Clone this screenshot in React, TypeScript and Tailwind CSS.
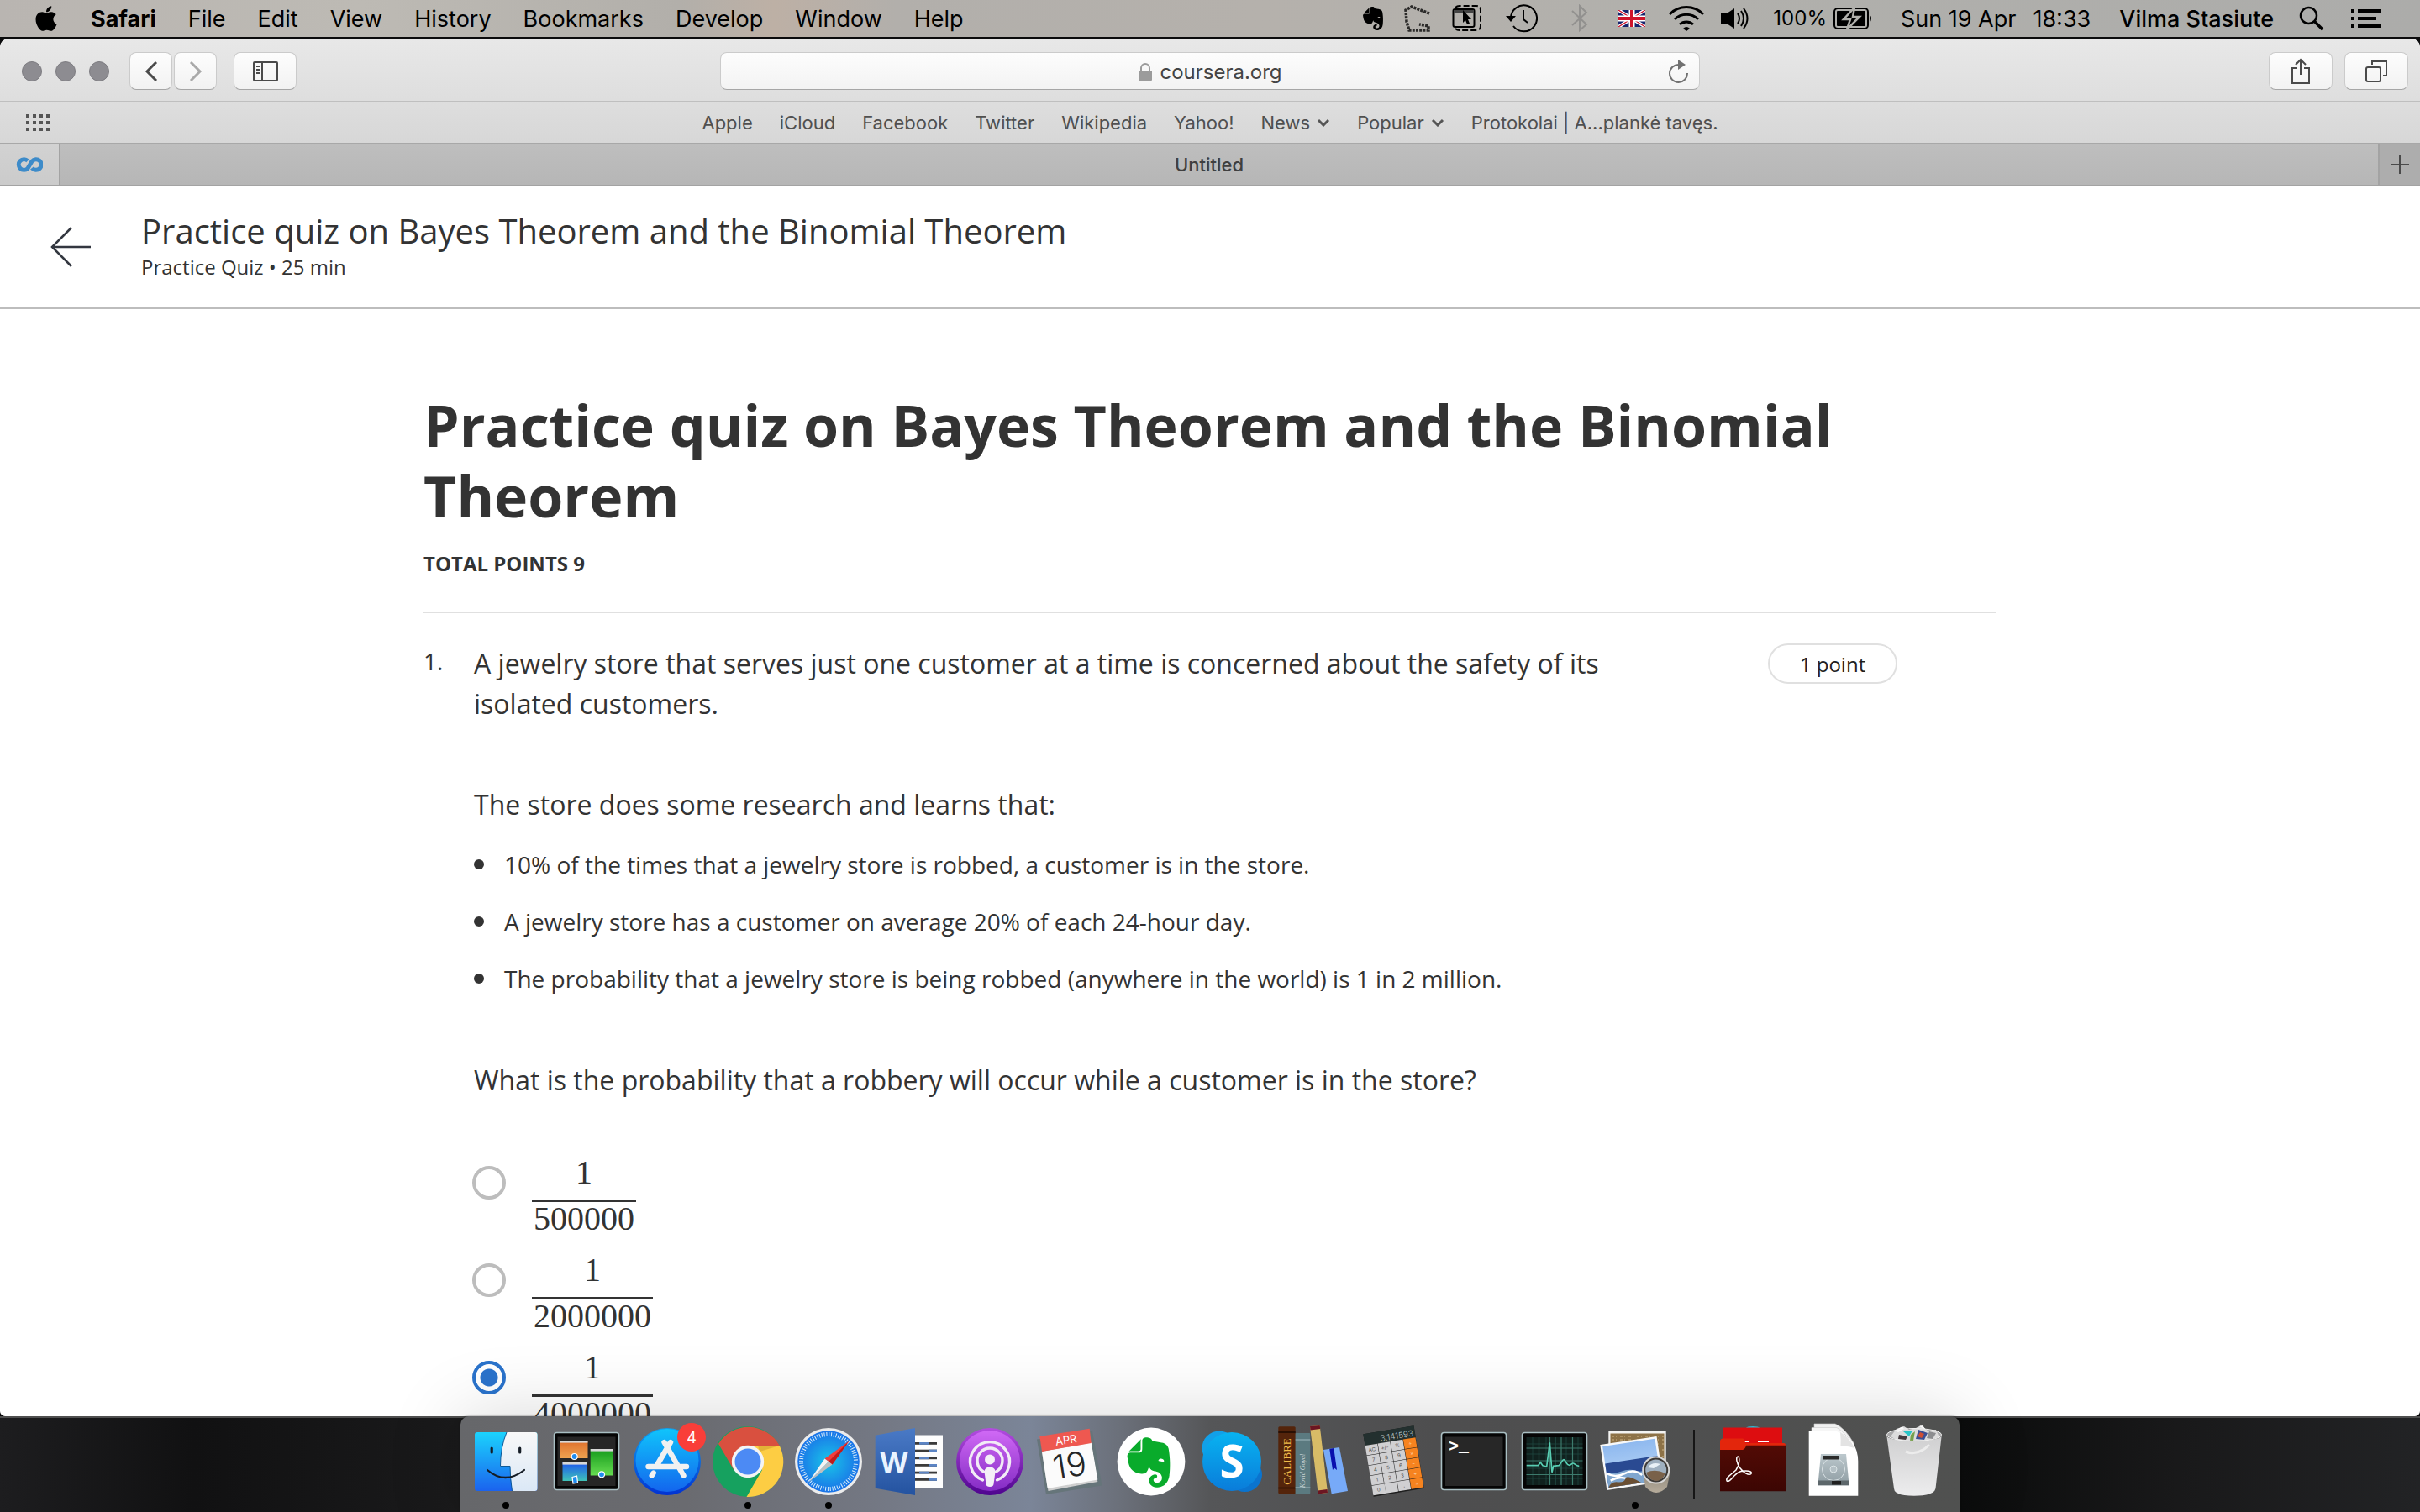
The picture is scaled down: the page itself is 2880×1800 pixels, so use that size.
import React, { useState } from "react";
import { FaApple, FaEvernote } from "react-icons/fa";

const menus = ["File", "Edit", "View", "History", "Bookmarks", "Develop", "Window", "Help"];

const bookmarks: { label: string; menu?: boolean }[] = [
  { label: "Apple" },
  { label: "iCloud" },
  { label: "Facebook" },
  { label: "Twitter" },
  { label: "Wikipedia" },
  { label: "Yahoo!" },
  { label: "News", menu: true },
  { label: "Popular", menu: true },
  { label: "Protokolai | A...plankė tavęs." },
];

const facts = [
  "10% of the times that a jewelry store is robbed, a customer is in the store.",
  "A jewelry store has a customer on average 20% of each 24-hour day.",
  "The probability that a jewelry store is being robbed (anywhere in the world) is 1 in 2 million.",
];

const answers = ["500000", "2000000", "4000000"];

/* ---------- menu bar ---------- */

function MenuBar() {
  return (
    <header className="flex h-11 shrink-0 items-center bg-[linear-gradient(90deg,#b9b5b1_0%,#bdbab4_15%,#b2afaa_28%,#bdb0a5_32%,#b2afab_37%,#b5b1ac_52%,#b1b0ac_70%,#acacaa_100%)] pr-[46px] pl-[38px] font-['Inter',sans-serif] text-[27px] leading-none text-black">
      <button aria-label="Apple menu" className="mr-9">
        <FaApple size={34} />
      </button>
      <nav aria-label="Menu bar" className="flex gap-[38px]">
        <button className="font-bold">Safari</button>
        {menus.map((m) => (
          <button key={m}>{m}</button>
        ))}
      </nav>
      <div className="ml-auto flex items-center">
        <FaEvernote size={32} className="mr-5" />
        <svg width="34" height="34" viewBox="0 0 34 34" className="mr-6" fill="none" stroke="#2b2a29" strokeWidth="3.5" strokeDasharray="3 1.2">
          <path d="M31 11L10 3L3 7L4 21L7 31H30V26L19 24" />
        </svg>
        <svg width="36" height="34" viewBox="0 0 36 34" className="mr-7" fill="none" stroke="#000" strokeWidth="2">
          <path d="M4 4Q6 2 9 2H29Q34 2 34 7V26Q34 31 29 31H9Q6 31 4 29" strokeDasharray="7 3" />
          <rect x="1.500" y="6" width="25" height="21" rx="2" />
          <path d="M2 9H26" stroke="#444" strokeWidth="4" />
          <path d="M13 7V22L16 19L18 24L21 23L19 18H23Z" fill="#000" stroke="none" />
        </svg>
        <svg width="38" height="34" viewBox="0 0 38 34" className="mr-10" fill="none" stroke="#000" strokeWidth="2">
          <path d="M6 17A15.500 15.500 0 1 1 9 26" />
          <path d="M0 14H12L6 21Z" fill="#000" stroke="none" />
          <path d="M21 7V18L26 22" />
        </svg>
        <svg width="20" height="34" viewBox="0 0 20 34" className="mr-9" fill="none" stroke="#92918f" strokeWidth="2">
          <path d="M1 8L18 24L10 31V2L18 10L1 25" />
        </svg>
        <svg width="32" height="20" viewBox="0 0 32 20" className="mr-7">
          <path d="M0 0H32V20H0Z" fill="#16246e" />
          <path d="M0 0L32 20M32 0L0 20" stroke="#fff" strokeWidth="4" />
          <path d="M0 0L32 20M32 0L0 20" stroke="#cf142b" strokeWidth="1.300" />
          <path d="M16 0V20M0 10H32" stroke="#fff" strokeWidth="7" />
          <path d="M16 0V20M0 10H32" stroke="#cf142b" strokeWidth="4" />
        </svg>
        <svg width="42" height="30" viewBox="0 0 42 30" className="mr-5" fill="none" stroke="#000" strokeWidth="3">
          <path d="M1 10A28 28 0 0 1 41 10M7 16A20 20 0 0 1 35 16M13 22A12 12 0 0 1 29 22" />
          <path d="M17 27Q21 23 25 27L21 30Z" fill="#000" stroke="none" />
        </svg>
        <svg width="34" height="26" viewBox="0 0 34 26" className="mr-7" fill="none" stroke="#000" strokeWidth="2">
          <path d="M0 7H7L16 1V25L7 19H0Z" fill="#000" stroke="none" />
          <path d="M20 7Q24 13 20 19M24 4Q30 13 24 22M27 1Q36 13 27 25" />
        </svg>
        <span className="mr-2 text-2xl leading-none">100%</span>
        <svg width="48" height="26" viewBox="0 0 48 26" className="mr-8">
          <rect x="1" y="1" width="40" height="24" rx="4" fill="none" stroke="#000" strokeWidth="2" />
          <rect x="4" y="4" width="34" height="18" rx="1" fill="#000" />
          <path d="M43 8Q47 13 43 18Z" />
          <path d="M25 0L12 14H20L16 26L31 11H23Z" fill="#000" stroke="#b1b0ac" strokeWidth="2.500" />
        </svg>
        <span className="mr-5">Sun 19 Apr</span>
        <span className="mr-[34px]">18:33</span>
        <span className="mr-[30px] font-medium">Vilma Stasiute</span>
        <button aria-label="Spotlight search" className="mr-8">
          <svg width="30" height="30" viewBox="0 0 30 30" fill="none" stroke="#000" strokeWidth="2.500">
            <circle cx="11.500" cy="11.500" r="9.500" />
            <path d="M18 18L28 28" strokeWidth="3.500" />
          </svg>
        </button>
        <button aria-label="Notification centre">
          <svg width="36" height="22" viewBox="0 0 36 22">
            <path d="M0 0H4V4H0ZM8 0H36V4H8ZM0 9H4V13H0ZM8 9H30V13H8ZM0 18H4V22H0ZM8 18H36V22H8Z" />
          </svg>
        </button>
      </div>
    </header>
  );
}

/* ---------- browser chrome ---------- */

function ToolButton({ label, className, children }: { label: string; className: string; children: React.ReactNode }) {
  return (
    <button
      aria-label={label}
      className={
        "flex h-[45px] items-center justify-center rounded-lg border border-[#cbcbcb] border-b-[#a6a6a6] bg-linear-to-b from-[#fdfdfd] to-[#f2f2f2] " +
        className
      }
    >
      {children}
    </button>
  );
}

function Toolbar() {
  const [url, setUrl] = useState("coursera.org");
  return (
    <div className="flex h-[76px] items-center border-b-2 border-[#bfbfbf] pt-[3px]">
      <div className="flex flex-1 items-center">
        <div className="mr-6 ml-[26px] flex gap-4">
          {["Close", "Minimise", "Zoom"].map((n) => (
            <button key={n} aria-label={n} className="size-6 rounded-full border border-[#7d7c81] bg-[#8d8c91]" />
          ))}
        </div>
        <ToolButton label="Back" className="mr-0.5 w-[51px]">
          <svg width="16" height="26" viewBox="0 0 16 26" fill="none" stroke="#4a4a4a" strokeWidth="3">
            <path d="M14 2L3 13L14 24" />
          </svg>
        </ToolButton>
        <ToolButton label="Forward" className="mr-5 w-[51px]">
          <svg width="16" height="26" viewBox="0 0 16 26" fill="none" stroke="#a9a9a9" strokeWidth="3">
            <path d="M2 2L13 13L2 24" />
          </svg>
        </ToolButton>
        <ToolButton label="Show sidebar" className="w-[75px]">
          <svg width="30" height="24" viewBox="0 0 30 24" fill="none" stroke="#4a4a4a" strokeWidth="2">
            <rect x="1" y="1" width="28" height="22" rx="1" />
            <path d="M11 1V23M4 6H8M4 10H8M4 14H8" />
          </svg>
        </ToolButton>
      </div>
      <div className="flex h-[45px] w-[40.5%] items-center rounded-lg border border-[#cbcbcb] border-b-[#a6a6a6] bg-linear-to-b from-[#fdfdfd] to-[#f3f3f3] px-3">
        <div className="w-6" />
        <label className="flex flex-1 items-center justify-center gap-2 pt-0.5">
          <svg width="18" height="22" viewBox="0 0 18 22" aria-label="Secure">
            <path d="M4 10V6a5 5 0 0 1 10 0V10" fill="none" stroke="#9b9b9b" strokeWidth="2" />
            <rect x="1" y="9" width="16" height="12" rx="1" fill="#9b9b9b" />
          </svg>
          <input
            aria-label="Address"
            value={url}
            onChange={(e) => setUrl(e.target.value)}
            className="[field-sizing:content] bg-transparent font-['Inter',sans-serif] text-2xl leading-8 text-[#444] outline-none"
          />
        </label>
        <button aria-label="Reload">
          <svg width="24" height="28" viewBox="0 0 24 28" fill="none" stroke="#717171" strokeWidth="2">
            <path d="M22 16A10.500 10.500 0 1 1 12 6" />
            <path d="M11 0L20 6L11 12Z" fill="#717171" stroke="none" />
          </svg>
        </button>
      </div>
      <div className="flex flex-1 justify-end gap-[14px]">
        <ToolButton label="Share" className="w-[76px]">
          <svg width="24" height="32" viewBox="0 0 24 32" fill="none" stroke="#4a4a4a" strokeWidth="2">
            <path d="M8 12H2V30H22V12H16M12 20V3M6 8L12 2L18 8" />
          </svg>
        </ToolButton>
        <ToolButton label="Show all tabs" className="mr-[14px] w-[76px]">
          <svg width="26" height="26" viewBox="0 0 26 26" fill="none" stroke="#4a4a4a" strokeWidth="2">
            <rect x="1" y="8" width="17" height="17" rx="2" />
            <path d="M8 5V1H25V18H21" />
          </svg>
        </ToolButton>
      </div>
    </div>
  );
}

function BookmarksBar() {
  return (
    <nav
      aria-label="Favourites"
      className="flex h-[50px] items-center border-b-2 border-[#a8a8a8] px-[30px] font-['Inter',sans-serif] text-[22px] leading-7 text-[#505050]"
    >
      <button aria-label="Top sites" className="w-[30px]">
        <svg width="30" height="20" viewBox="0 0 30 20" fill="#555">
          {[0, 8, 16].map((y) =>
            [1, 9, 17, 25].map((x) => <rect key={`${x}-${y}`} x={x} y={y} width="4" height="4" />),
          )}
        </svg>
      </button>
      <div className="flex flex-1 justify-center gap-8">
        {bookmarks.map((b) => (
          <a key={b.label} href="#" className="flex items-center gap-2">
            {b.label}
            {b.menu && (
              <svg width="16" height="10" viewBox="0 0 16 10" fill="none" stroke="#555" strokeWidth="3">
                <path d="M2 2L8 8L14 2" />
              </svg>
            )}
          </a>
        ))}
      </div>
      <div className="w-[30px]" />
    </nav>
  );
}

function TabBar() {
  return (
    <div className="flex h-[50px] border-b-2 border-[#a3a3a3] bg-linear-to-b from-[#bebebe] to-[#b6b6b6]">
      <button aria-label="Coursera tab" className="flex w-[72px] items-center justify-center border-r-2 border-[#a3a3a3] bg-linear-to-b from-[#d2d2d2] to-[#cbcbcb]">
        <svg width="32" height="18" viewBox="0 0 32 18" fill="none" stroke="#3d8bc9" strokeWidth="5">
          <path d="M14 4.500A6.300 6.300 0 1 0 14 13.500L19 5A6.300 6.300 0 1 1 19 13" />
        </svg>
      </button>
      <button className="flex-1 pr-6 text-center font-['Inter',sans-serif] text-[22px] font-medium text-[#3f3f3f]">Untitled</button>
      <button aria-label="New tab" className="flex w-[50px] items-center justify-center border-l-2 border-[#a3a3a3] bg-[#adadad]">
        <svg width="24" height="24" viewBox="0 0 24 24" stroke="#4a4a4a" strokeWidth="2">
          <path d="M12 1V23M1 12H23" />
        </svg>
      </button>
    </div>
  );
}

/* ---------- quiz page ---------- */

function QuizHeader() {
  return (
    <div className="flex h-[146px] items-center border-b-2 border-[#bdbdbd] text-[#333]">
      <button aria-label="Back" className="mr-[60px] ml-[60px]">
        <svg width="48" height="48" viewBox="0 0 48 48" fill="none" stroke="#333740" strokeWidth="2.500">
          <path d="M48 24H2M25 1L2 24L25 47" />
        </svg>
      </button>
      <div className="-mt-0.5">
        <div className="text-[40px] leading-[50px]">Practice quiz on Bayes Theorem and the Binomial Theorem</div>
        <div className="text-2xl leading-9">Practice Quiz • 25 min</div>
      </div>
    </div>
  );
}

function Quiz() {
  const [picked, setPicked] = useState("4000000");
  return (
    <article className="mx-auto w-[65%] pt-24 text-[#333]">
      <h1 className="text-[68px] leading-[84px] font-bold">Practice quiz on Bayes Theorem and the Binomial Theorem</h1>
      <h2 className="mt-[21px] text-2xl leading-9 font-bold">TOTAL POINTS 9</h2>
      <hr className="mt-[39px] mb-9 border-t-2 border-[#e0e0e0]" />
      <section className="flex items-start">
        <div className="w-[60px] shrink-0 text-[28px] leading-[42px]">1.</div>
        <div className="w-[1420px] text-[32px] leading-[48px]">
          <p className="w-[1360px]">
            A jewelry store that serves just one customer at a time is concerned about the safety of its isolated customers.
          </p>
          <p className="mt-[72px]">The store does some research and learns that:</p>
          <ul className="mt-[26px] flex flex-col gap-[26px] text-[28px] leading-[42px]">
            {facts.map((f) => (
              <li key={f} className="flex items-center gap-6">
                <span className="size-3 rounded-full bg-[#333]" />
                {f}
              </li>
            ))}
          </ul>
          <p className="mt-[76px]">What is the probability that a robbery will occur while a customer is in the store?</p>
          <fieldset className="mt-[66px] flex flex-col gap-[21px]">
            {answers.map((a) => (
              <label key={a} className="flex items-start">
                <input
                  type="radio"
                  name="answer"
                  checked={picked === a}
                  onChange={() => setPicked(a)}
                  className="-ml-0.5 mt-3 mr-[31px] size-10 appearance-none rounded-full border-4 border-[#bdbdbd] checked:border-[#2a73cc] checked:bg-[radial-gradient(circle,#2a73cc_10px,transparent_11px)]"
                />
                <span className="flex flex-col text-center font-['Liberation_Serif',serif] text-[40px] leading-10">
                  <span className="mb-3">1</span>
                  <span className="border-t-[3px] border-[#333] px-0.5">{a}</span>
                </span>
              </label>
            ))}
          </fieldset>
        </div>
        <div className="ml-[120px] flex h-12 w-[154px] items-center justify-center rounded-full border-2 border-[#e0e0e0] pt-0.5 text-2xl text-[#1f1f1f]">
          1 point
        </div>
      </section>
    </article>
  );
}

/* ---------- dock ---------- */

function DockItem({ name, running, children }: { name: string; running?: boolean; children: React.ReactNode }) {
  return (
    <button aria-label={name} className="w-24">
      <svg width="96" height="114" viewBox="0 0 96 114">
        {children}
        {running && <circle cx="48" cy="106" r="4" fill="#000" />}
      </svg>
    </button>
  );
}

function Gradient({ id, from, to, x2 = "0" }: { id: string; from: string; to: string; x2?: string }) {
  return (
    <linearGradient id={id} x1="0" y1="0" x2={x2} y2="1">
      <stop offset="0" stopColor={from} />
      <stop offset="1" stopColor={to} />
    </linearGradient>
  );
}

function Screen() {
  return (
    <rect x="9.500" y="19.500" width="77" height="68" rx="3" fill="#050505" stroke="#a9bfc3" strokeWidth="1.600" />
  );
}

const calcKeys = [
  ["AC", "+/-", "%", "÷"],
  ["7", "8", "9", "×"],
  ["4", "5", "6", "−"],
  ["1", "2", "3", "+"],
  ["0", "", ".", "="],
];

function Dock() {
  return (
    <nav
      aria-label="Dock"
      className="relative z-10 flex h-full rounded-t-[10px] bg-[linear-gradient(90deg,#66676a_0%,#6a6b70_15%,#737782_27%,#7b8598_38%,#6b707a_44%,#555658_50%,#4e4e4f_65%,#505150_100%)] px-1.5 shadow-[0_0_90px_rgba(0,0,0,0.16),0_0_3px_rgba(0,0,0,0.5)]"
    >
      <DockItem name="Finder" running>
        <defs>
          <Gradient id="fin" from="#1bd3fd" to="#1b63ee" />
          <Gradient id="fin2" from="#f8f8f8" to="#dbe8f6" />
        </defs>
        <rect x="11" y="19" width="74.500" height="70" rx="3" fill="url(#fin)" />
        <path d="M49 19H82.500Q85.500 19 85.500 22V86Q85.500 89 82.500 89H55.500Q54 75 53 60H41.500Q41.500 37 49 19Z" fill="url(#fin2)" />
        <path d="M49 19Q41.500 37 41.500 59.500H53Q53 75 55.500 89" fill="none" stroke="#0f5a97" strokeWidth="1" />
        <path d="M31.200 38V43M64.700 38V43" stroke="#141c25" strokeWidth="3.200" strokeLinecap="round" />
        <path d="M26 64Q47 82 70 64" fill="none" stroke="#141c25" strokeWidth="2.200" strokeLinecap="round" />
      </DockItem>
      <DockItem name="Mission Control">
        <defs>
          <Gradient id="mo" from="#de6f2c" to="#efa351" />
          <Gradient id="mg" from="#149a1b" to="#66dc51" />
          <Gradient id="mb" from="#1d56ee" to="#3fc3b8" />
        </defs>
        <Screen />
        <rect x="13.500" y="24.500" width="69" height="58.500" fill="#262626" />
        <rect x="17" y="29" width="32.500" height="21" fill="url(#mo)" />
        <rect x="17" y="29" width="32.500" height="2.600" fill="#d8d8d8" />
        <rect x="52.700" y="39" width="26.500" height="31.500" fill="url(#mg)" />
        <rect x="52.700" y="39" width="26.500" height="2.600" fill="#d8d8d8" />
        <rect x="19.500" y="55" width="28.500" height="22" fill="url(#mb)" />
        <rect x="19.500" y="55" width="28.500" height="2.600" fill="#d8d8d8" />
        <circle cx="33.700" cy="48" r="3.500" fill="#1f8cf0" stroke="#fff" strokeWidth="1.200" />
        <circle cx="66" cy="69.300" r="3.500" fill="#1f8cf0" stroke="#fff" strokeWidth="1.200" />
        <path d="M31 72.500L36.500 71L37.500 79L32 80Z" fill="#1f8cf0" stroke="#fff" strokeWidth="1.200" />
      </DockItem>
      <DockItem name="App Store">
        <defs>
          <Gradient id="as" from="#10c4fb" to="#1366ee" />
          <Gradient id="as2" from="#10a0ee" to="#0232d2" />
        </defs>
        <circle cx="48" cy="54" r="40" fill="url(#as2)" />
        <circle cx="48" cy="52.500" r="37.500" fill="url(#as)" />
        <g stroke="#f1f1f1" strokeWidth="6.400" strokeLinecap="round">
          <path d="M52 31L36 58M31.700 67.500L29.700 70.500M25.500 60H71M44.500 31L67.500 70.500" />
        </g>
        <circle cx="77" cy="25" r="17" fill="#f93e39" />
        <text x="77" y="31.500" textAnchor="middle" fontSize="18" fill="#fff" className="font-['Inter',sans-serif]">4</text>
      </DockItem>
      <DockItem name="Chrome" running>
        <circle cx="48" cy="54" r="42" fill="#16a15f" />
        <path d="M85.700 35A42 42 0 0 1 46.500 96L65 64L48 35Z" fill="#fdcd43" />
        <path d="M13 32.700A42 42 0 0 1 85.700 35H48L31 63.500Z" fill="#d9503f" />
        <path d="M62 42L85.700 35H60Z" fill="#c99a2c" opacity=".5" />
        <circle cx="48" cy="54" r="19.200" fill="#f4f4f4" />
        <circle cx="48" cy="54" r="15.500" fill="#4c8af4" />
      </DockItem>
      <DockItem name="Safari" running>
        <defs>
          <radialGradient id="saf">
            <stop offset="0" stopColor="#19c5e8" />
            <stop offset="1" stopColor="#1a73e8" />
          </radialGradient>
        </defs>
        <circle cx="48" cy="54" r="40" fill="#ececec" />
        <circle cx="48" cy="54" r="36.800" fill="url(#saf)" />
        <circle cx="48" cy="54" r="32.500" fill="none" stroke="#d7ecfb" strokeWidth="5" strokeDasharray="1 1.836" />
        <path d="M72.500 29.500L43.500 50.500L52.500 57.500Z" fill="#f23d3b" />
        <path d="M72.500 29.500L48 54L52.500 57.500Z" fill="#c11b1b" />
        <path d="M24 78.500L43.500 50.500L48 54Z" fill="#f3f3f3" />
        <path d="M24 78.500L52.500 57.500L48 54Z" fill="#bfbfbf" />
      </DockItem>
      <DockItem name="Word">
        <defs>
          <Gradient id="wd" from="#4a7ac6" to="#2453a0" />
        </defs>
        <rect x="54" y="22.500" width="34" height="63.500" fill="#fdfdfd" />
        {[31, 39.7, 48.4, 57, 65.7, 74].map((y, i) => (
          <g key={y}>
            <rect x="55" y={y} width="26" height="2.800" fill="#3a3a3a" />
            <rect x={i % 2 ? 72 : 60} y={y} width={i % 2 ? 9 : 11} height="2.800" fill="#5b84c4" />
          </g>
        ))}
        <path d="M7.700 22.700L55 14V94L7.700 85.700Z" fill="url(#wd)" />
        <text x="30" y="67" textAnchor="middle" fontSize="34" fill="#eaf3ff" className="font-['Open_Sans',sans-serif] font-bold">W</text>
      </DockItem>
      <DockItem name="Podcasts">
        <defs>
          <Gradient id="pd" from="#d069f5" to="#842cc4" />
          <Gradient id="pd2" from="#b44de0" to="#4e038e" />
        </defs>
        <circle cx="48" cy="54" r="40" fill="url(#pd2)" />
        <circle cx="48" cy="53" r="36" fill="url(#pd)" />
        <g fill="none" stroke="#f2ecf6" strokeWidth="3.400" strokeLinecap="round">
          <path d="M39.500 76A23.500 23.500 0 1 1 56.500 76" />
          <path d="M40.500 66A15 15 0 1 1 55.500 66" />
        </g>
        <circle cx="48" cy="51.500" r="6" fill="#f4f0f7" />
        <path d="M41.500 66Q42 60.500 48 60.500T54.500 66L52.500 81Q52 84 48 84T43.500 81Z" fill="#f4f0f7" />
      </DockItem>
      <DockItem name="Calendar">
        <path d="M8 27.500L74 17.500L85.500 82.500L19 93Z" fill="#66757a" />
        <path d="M14 42L72.700 31.500L80.300 78L21.500 89Z" fill="#cfcfcf" />
        <path d="M14 42L72.700 31.500L80.300 75.500L20.700 86Z" fill="#fbfbfb" />
        <path d="M11.300 24L70.700 14.700L72.700 32L14 42Z" fill="#ee5850" />
        <g className="font-['Inter',sans-serif]" textAnchor="middle">
          <text x="42.700" y="33" fontSize="13" fill="#fff" transform="rotate(-9 42.700 28)">APR</text>
          <text x="47" y="72.500" fontSize="40" fill="#262626" fontWeight="300" transform="rotate(-9 47 58)">19</text>
        </g>
      </DockItem>
      <DockItem name="Evernote">
        <circle cx="48" cy="54" r="40.400" fill="#fff" />
        <FaEvernote x="11" y="21" size={68} color="#09ab2b" />
      </DockItem>
      <DockItem name="Skype">
        <defs>
          <Gradient id="sk" from="#08b3f1" to="#0a7cda" />
        </defs>
        <circle cx="33" cy="38" r="20.500" fill="#12a0e8" />
        <circle cx="63.500" cy="69.500" r="20.500" fill="#0a74cf" />
        <circle cx="48" cy="54" r="35" fill="url(#sk)" />
        <text x="48" y="73" textAnchor="middle" fontSize="53" fill="#fff" className="font-['Open_Sans',sans-serif] font-bold">S</text>
      </DockItem>
      <DockItem name="calibre">
        <rect x="7.300" y="12.300" width="20.400" height="80" rx="1.500" fill="#54240b" />
        <path d="M7.300 19H27.700M7.300 85.500H27.700" stroke="#1c0a02" strokeWidth="1.500" />
        <rect x="27.700" y="20" width="17.600" height="72.300" rx="1" fill="#5b7a80" />
        <path d="M27.700 28H45.300M27.700 85H45.300" stroke="#8aa5aa" strokeWidth="1.500" />
        <path d="M45 12L56.700 11L66 91L54.700 92.500Z" fill="#d8bb67" />
        <path d="M45 12L56.700 11L57.300 15L45.500 16.500ZM54.200 88.500L65.500 87L66 91L54.700 92.500Z" fill="#6c1622" />
        <path d="M61 40L80 37L90 89L70.700 92.300Z" fill="#77aaf8" />
        <path d="M68.300 39L73.300 38L77 64L73.800 61.500L72 64Z" fill="#0a0fae" />
        <text fontSize="13" fill="#f2bd4b" textAnchor="middle" transform="translate(22 54) rotate(-90)" className="font-['Liberation_Serif',serif]">CALIBRE</text>
        <text fontSize="8" fill="#c7d6d9" textAnchor="middle" fontStyle="italic" transform="translate(39 65) rotate(-90)" className="font-['Liberation_Serif',serif]">Kovid Goyal</text>
      </DockItem>
      <DockItem name="Calculator">
        <g transform="translate(12.300 21.300) rotate(-9.400)" className="font-['Inter',sans-serif]">
          <rect width="61" height="75.500" fill="#1d1d1d" />
          <rect width="61" height="14" fill="#23302f" />
          <text x="59" y="12" textAnchor="end" fontSize="10" fill="#b9c4c4" fontWeight="300">3.141593</text>
          {calcKeys.map((row, r) =>
            row.map((k, c) => (
              <g key={`${r}-${c}`}>
                <rect x={c * 15.3} y={14 + r * 12.1} width={r === 4 && c === 0 ? 15.3 : 14.8} height="11.600" fill={c === 3 ? "#f6831f" : "#d0d0d2"} />
                <text x={c * 15.3 + 7.4} y={22 + r * 12.1} textAnchor="middle" fontSize="6" fill={c === 3 ? "#fcd9b4" : "#4d4d4f"}>
                  {k}
                </text>
              </g>
            )),
          )}
        </g>
      </DockItem>
      <DockItem name="Terminal">
        <Screen />
        <rect x="14" y="24.500" width="68.500" height="58.500" fill="#272727" />
        <text x="18" y="42" fontSize="20" fill="#fff" className="font-['Liberation_Mono',monospace] font-bold">&gt;_</text>
      </DockItem>
      <DockItem name="Activity Monitor">
        <Screen />
        <rect x="14.500" y="25" width="67" height="57" fill="#10211e" />
        <path d="M22 25V82M29.500 25V82M49.500 25V82M69.500 25V82M62 25V82M14.500 33H81.500M14.500 45H81.500M14.500 62H81.500M14.500 74H81.500M38 25V82M76 25V82" stroke="#1f4740" strokeWidth=".8" />
        <path d="M29.500 25V82M42.500 25V82M56 25V82M69.500 25V82M14.500 38H81.500M14.500 53H81.500M14.500 69.500H81.500" stroke="#3c7a6c" strokeWidth="1.200" />
        <path d="M14.700 58.700H28.500L31.300 55L34 58.700L38.700 60L42.300 31.300L45 66.700L46.700 59.300L53.300 58.700C56 56 57 51.700 59 51.700S62 57 64 57.700C67 60 68 56 70 56S73 59.300 77.300 59.300" fill="none" stroke="#58cdb2" strokeWidth="1.700" />
      </DockItem>
      <DockItem name="Preview" running>
        <defs>
          <Gradient id="pv" from="#8fb9ef" to="#bcd8f6" />
          <Gradient id="pl" from="#8c8578" to="#b5ab9b" />
        </defs>
        <rect x="16.300" y="18" width="68.400" height="56" fill="#f3f3f1" />
        <rect x="18.500" y="20.500" width="64" height="50" fill="#8d7247" />
        <path d="M20 24H82M20 28H82M20 33H82M60 40H82M70 48H82" stroke="#d0b483" strokeWidth="1.200" strokeDasharray="3 2 1 4" />
        <g transform="translate(6.300 34) rotate(-8.500)">
          <rect width="68" height="54.500" fill="#f8f8f8" />
          <rect x="2.500" y="2.500" width="63" height="49.500" fill="url(#pv)" />
          <rect x="2.500" y="23" width="63" height="29" fill="#2a4a92" />
          <path d="M2.500 34Q10 37 20 35T38 37T66 35V52H2.500Z" fill="#7fa6cf" />
          <path d="M3 35Q12 42 24 38T44 43M6 44Q18 39 28 46" fill="none" stroke="#fff" strokeWidth="2.500" />
          <path d="M2.500 52Q6 45 14 47T24 44T42 52Z" fill="#6a4f33" />
        </g>
        <path d="M57 64L60 84Q73 98 86 84L90 64Z" fill="url(#pl)" />
        <circle cx="72.700" cy="64" r="16.500" fill="#d7d7d7" />
        <circle cx="72.700" cy="64" r="14.500" fill="#3d3a37" />
        <circle cx="72.700" cy="64" r="12.500" fill="#9fb0c0" />
        <path d="M61 67Q72 62 84 68Q80 77 72.500 77Q64 76 61 67Z" fill="#79614a" />
        <path d="M63 61Q68 54 78 57L70 62Z" fill="#e9f1f7" />
      </DockItem>
      <div className="flex w-11 justify-center pt-4">
        <div className="h-[82px] w-0.5 bg-[#161616]" />
      </div>
      <DockItem name="Adobe Acrobat">
        <defs>
          <Gradient id="ac" from="#520b05" to="#3c0603" />
        </defs>
        <ellipse cx="48" cy="14" rx="8" ry="2" fill="#2fb7cf" />
        <rect x="13" y="13.500" width="70" height="40" fill="#dd0d10" />
        <path d="M38 29.500H43V31H38ZM54 29.500H67V31H54Z" fill="#fff" />
        <path d="M9 30Q9 27 12 26.500H36Q38.500 27 39 32H85Q87 32 87 35V60H9Z" fill="#e3260c" />
        <path d="M9 40H36Q39 39 40 34.700H87V89.300H9Z" fill="url(#ac)" />
        <path d="M17 77C15 73 23 69 28 64C32 58 33 50 30.500 48C27 48 29 57 33 62C37 67 43 71 46 68.500C48 65 40 64.500 34 65.500C26 67 21 80 17 77Z" fill="none" stroke="#fff" strokeWidth="1.500" />
      </DockItem>
      <DockItem name="Disk images">
        <defs>
          <Gradient id="hd" from="#bcc8cd" to="#8e9ca2" />
        </defs>
        <path d="M25 9H50Q62 14 72 32V80H25Z" fill="#f0f0f0" stroke="#c9c9c9" strokeWidth=".6" />
        <path d="M22 13.500H52Q66 22 75 42V88H22Z" fill="#f6f6f6" stroke="#c9c9c9" strokeWidth=".6" />
        <path d="M18.700 18H52Q77.300 28 77.300 54V94.700H18.700Z" fill="#fff" />
        <path d="M56 19Q57 28 56.500 35.500Q66 35 73 38Q68 26 56 19Z" fill="#e3e3e3" />
        <path d="M33 45H63L66 76V82.300H30V76Z" fill="url(#hd)" />
        <circle cx="48" cy="63" r="13.500" fill="none" stroke="#dbe3e6" strokeWidth="1" />
        <circle cx="48" cy="63" r="4" fill="#b4c0c5" stroke="#dbe3e6" strokeWidth="1" />
        <rect x="36" y="47" width="18" height="4.500" fill="#2b2b2b" />
        <path d="M30 76.500H66V82.300H30Z" fill="#5d676b" />
        <rect x="46" y="77" width="11" height="4.500" fill="#202020" />
      </DockItem>
      <DockItem name="Trash">
        <defs>
          <Gradient id="tr" from="#cfcfd0" to="#ededee" />
        </defs>
        <ellipse cx="48" cy="22" rx="32.500" ry="7" fill="#a9a9aa" />
        <path d="M20 24L27 15L36 12L42 16L50 14L56 11L64 17L74 16L78 25L60 30H30Z" fill="#dcdcdc" />
        <path d="M26 17L34 12L36 15L29 19ZM54 12L58 11L62 16Z" fill="#fafafa" />
        <path d="M30 22L40 24L38 28L29 27Z" fill="#453c40" />
        <path d="M35 18L46 17L42 24Z" fill="#29c5c8" />
        <path d="M44 22L49 18L47 29H43Z" fill="#77a04c" />
        <path d="M53 16L64 20L60 28L50 27Z" fill="#3d4f94" />
        <path d="M55 19L60 21L57 26L52 24Z" fill="#cf4f33" />
        <path d="M66 18L74 20L70 27L63 26Z" fill="#8c8d8f" />
        <path d="M15.300 23Q17 29 48 29T80.700 23L73.500 86Q72 94.700 48 94.700T24 86Z" fill="url(#tr)" />
        <ellipse cx="48" cy="22" rx="32.500" ry="7.500" fill="none" stroke="#f0f0f0" strokeWidth="1" />
        <path d="M38 42Q52 48 66 34" fill="none" stroke="#ececec" strokeWidth="3" />
      </DockItem>
    </nav>
  );
}

export default function App() {
  return (
    <div className="flex h-screen flex-col overflow-hidden bg-[#0b0b0c] font-['Open_Sans',sans-serif]">
      <MenuBar />
      <main className="mt-0.5 flex min-h-0 flex-1 flex-col overflow-hidden rounded-t-[10px] rounded-b-md bg-white">
        <div className="shrink-0 bg-linear-to-b from-[#e8e8e8] to-[#d0d0d0]">
          <Toolbar />
          <BookmarksBar />
          <TabBar />
        </div>
        <div className="min-h-0 flex-1 overflow-hidden">
          <QuizHeader />
          <Quiz />
        </div>
      </main>
      <footer className="flex h-[114px] shrink-0 justify-center bg-[linear-gradient(90deg,#1d1d1f_0%,#111112_8%,#1a1a1b_19%,#0b0c0c_81%,#19191a_90%,#222325_100%)] shadow-[inset_0_2px_0_#4f4f4f]">
        <Dock />
      </footer>
    </div>
  );
}
